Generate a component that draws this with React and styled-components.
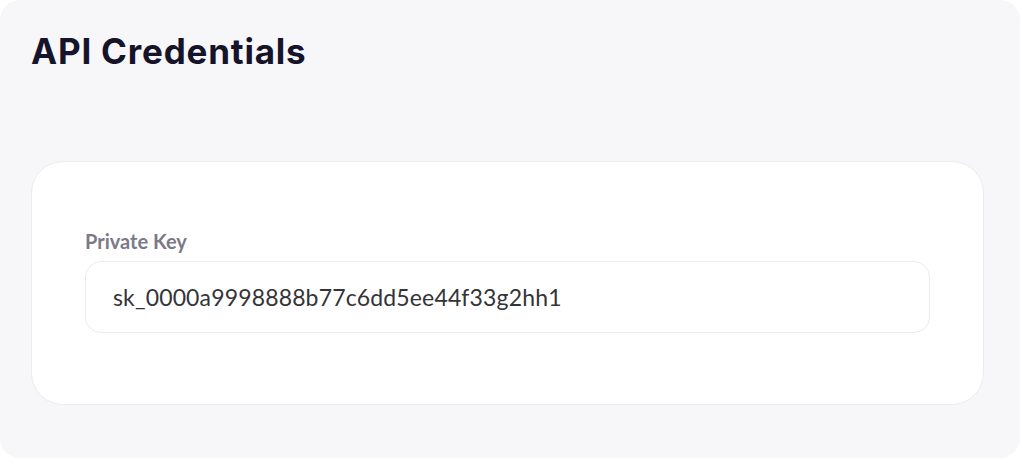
import React from "react";
import styled, { createGlobalStyle } from "styled-components";

const Global = createGlobalStyle`
  html, body { margin: 0; padding: 0; background: #ffffff; }
  body { font-family: "Inter", "Noto Sans", sans-serif; }
  * { box-sizing: border-box; }
`;

const Panel = styled.div`
  width: 1020px;
  height: 458px;
  background: #f7f7f9;
  border-radius: 20px;
  padding: 28px 36px 0 31px;
  display: flex;
  flex-direction: column;
`;

const Title = styled.h1`
  margin: 0;
  font-family: "Inter", sans-serif;
  font-weight: 700;
  font-size: 35px;
  line-height: 46px;
  color: #16142a;
  letter-spacing: 0.8px;
`;

const Card = styled.section`
  margin-top: 87px;
  background: #ffffff;
  border: 1px solid #ececef;
  border-radius: 32px;
  padding: 67px 53px 71px 53px;
  display: flex;
  flex-direction: column;
  gap: 8px;
`;

const Label = styled.label`
  font-family: "Lato", sans-serif;
  font-weight: 700;
  font-size: 20px;
  line-height: 24px;
  color: #7b7a86;
`;

const KeyField = styled.div`
  height: 72px;
  border: 1px solid #ececef;
  border-radius: 16px;
  background: #ffffff;
  display: flex;
  align-items: center;
  padding: 0 27px;
  font-family: "Lato", sans-serif;
  font-size: 23px;
  letter-spacing: 0.15px;
  color: #343438;
`;

export default function App() {
  return (
    <>
      <Global />
      <Panel>
        <Title>API Credentials</Title>
        <Card>
          <Label>Private Key</Label>
          <KeyField>sk_0000a9998888b77c6dd5ee44f33g2hh1</KeyField>
        </Card>
      </Panel>
    </>
  );
}
